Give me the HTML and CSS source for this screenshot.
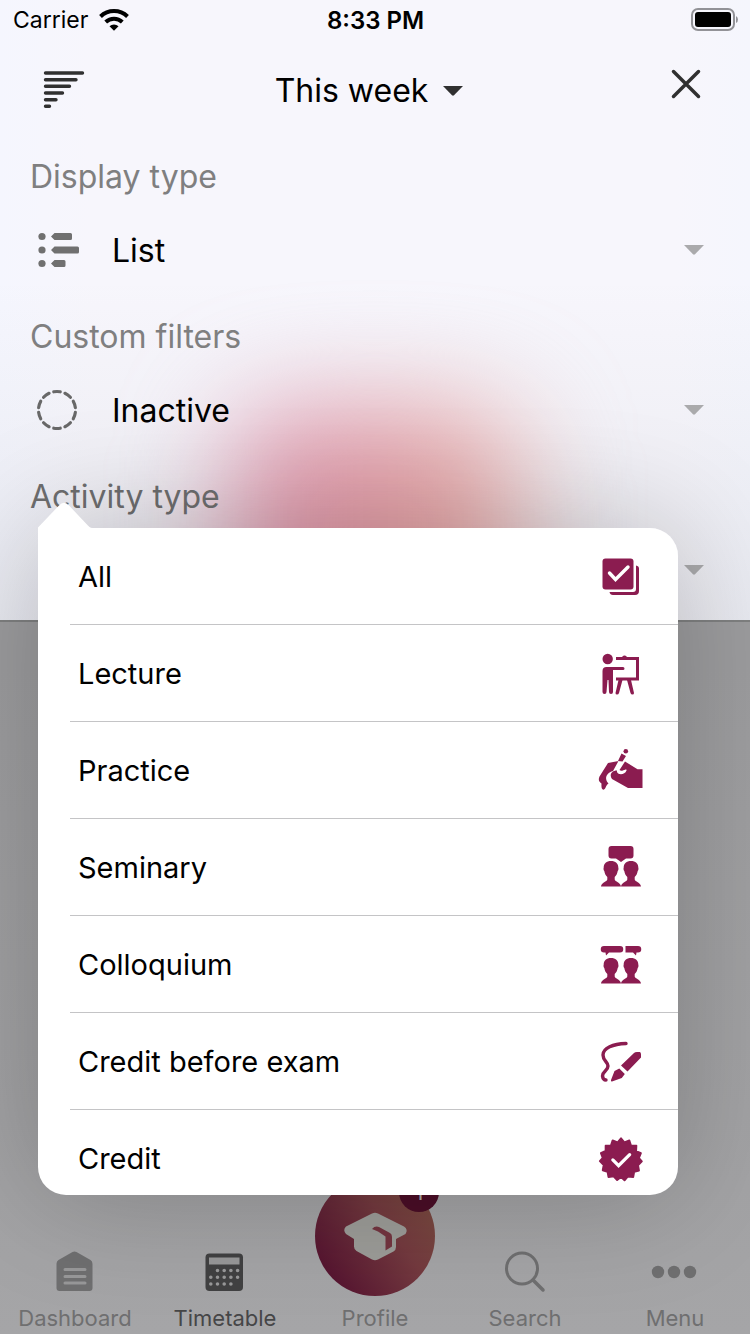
FILE: index.html
```html
<!DOCTYPE html>
<html lang="en">
<head>
<meta charset="utf-8">
<meta name="viewport" content="width=device-width, initial-scale=1">
<title>Timetable filters</title>
<link rel="stylesheet" href="styles.css">
</head>
<body>
<svg class="sprite" aria-hidden="true">
  <symbol id="caret" viewBox="0 0 20 10"><path d="M0 0h20L11 9.300q-1 .9-2 0z"/></symbol>
  <symbol id="person" viewBox="0 0 20 26"><path d="M10 0C14.500 0 17.300 2.600 17.300 6.500C17.600 7.500 17.600 9 16.700 10C16.300 12.600 15.300 14.500 13.700 16V18.500C14 20.800 19.500 21.300 20 25.500H0C.5 21.300 6 20.800 6.300 18.500V16C4.700 14.500 3.700 12.600 3.300 10C2.400 9 2.400 7.500 2.700 6.500C2.700 2.600 5.500 0 10 0z"/></symbol>
</svg>
<div class="app">
  <section class="panel">
    <div class="panel-glow" aria-hidden="true"><div class="glow"></div></div>
    <div class="status">
      <div class="carrier"><span>Carrier</span>
        <svg width="30" height="22" viewBox="0 0 30 22"><g fill="none" stroke="#000" stroke-width="4"><path d="M1.500 7.500A19.500 19.500 0 0 1 28.500 7.500"/><path d="M6.700 13A12 12 0 0 1 23.300 13"/></g><path d="M10.500 17.200A6.500 6.500 0 0 1 19.500 17.200L15 21.800z"/></svg>
      </div>
      <span class="time">8:33 PM</span>
      <svg class="battery" width="48" height="24" viewBox="0 0 48 24"><rect x="2" y="1" width="42" height="21" rx="6" fill="none" stroke="#929297" stroke-width="2"/><rect x="5" y="4" width="36" height="15" rx="3"/><path d="M46 8q2 1 2 3.500t-2 3.500z" fill="#929297"/></svg>
    </div>
    <header class="header">
      <button class="icon-button" aria-label="Sort"><svg width="72" height="48" viewBox="0 0 72 48"><path d="M17.500 7h37M17.500 13.700h30.500M17.500 20.300h24M17.500 27h17M17.500 33.700h10.500M17.500 40.300h4" stroke="#303030" stroke-width="3.400" stroke-linecap="round"/></svg></button>
      <button class="title">This week<svg class="caret dark" width="20" height="10"><use href="#caret"/></svg></button>
      <button class="icon-button close" aria-label="Close"><svg width="48" height="48" viewBox="0 0 48 48"><path d="M11.500 5.500l25 25M36.500 5.500l-25 25" stroke="#303030" stroke-width="3.500" stroke-linecap="round"/></svg></button>
    </header>
    <div class="group">
      <h2 class="label">Display type</h2>
      <button class="select"><svg width="52" height="48" viewBox="0 0 52 48" fill="#707070"><circle cx="10" cy="10.500" r="3.600"/><circle cx="10" cy="24" r="3.600"/><circle cx="10" cy="37.500" r="3.600"/><path d="M19 10.500l3.500-3.500H38.500q1.500 0 1.500 1.500v4q0 1.500-1.500 1.500H22.500zM19 24l3.500-3.500H45.500q1.500 0 1.500 1.500v4q0 1.500-1.500 1.500H22.500zM19 37.500l3.500-3.500H32q1.500 0 1.500 1.500v4q0 1.500-1.500 1.500H22.500z"/></svg><span>List</span><svg class="caret" width="20" height="10"><use href="#caret"/></svg></button>
    </div>
    <div class="group">
      <h2 class="label">Custom filters</h2>
      <button class="select"><svg width="52" height="48" viewBox="0 0 52 48"><circle cx="25" cy="24" r="18.500" fill="none" stroke="#686868" stroke-width="3.200" stroke-linecap="round" pathLength="100" stroke-dasharray="5.800 4.200" stroke-dashoffset="-2.100"/></svg><span>Inactive</span><svg class="caret" width="20" height="10"><use href="#caret"/></svg></button>
    </div>
    <div class="group">
      <h2 class="label dim">Activity type</h2>
      <button class="select" aria-label="Activity type"><span></span><svg class="caret" width="20" height="10"><use href="#caret"/></svg></button>
      <div class="popover">
        <svg class="arrow" width="54" height="27" viewBox="0 0 54 27"><path d="M0 27V25.500L21 3.500Q26 -2 31 3.500L48 21.500Q52 26 54 26V27z" fill="#fff"/></svg>
        <ul class="options">
          <li><button class="option">All<svg viewBox="0 0 48 48"><rect x="5.500" y="6.500" width="31" height="31" rx="3"/><path d="M39 13.500q3 .5 3 3V39q0 4-4 4H16q-3 0-3.500-3H36q3 0 3-3z"/><path d="M12.500 21l6 6.500L31 15" fill="none" stroke="#fff" stroke-width="3.400" stroke-linecap="round"/></svg></button></li>
          <li><button class="option">Lecture<svg viewBox="0 -1 48 48"><circle cx="10.700" cy="9" r="5.200"/><path d="M5.500 21q0-4 4-4H26q1.500 0 1.500 1.500T26 20H16v22q0 2-2 2t-2-2l-.5-12h-1L9.500 42q0 2-2 2t-2-2z"/><path d="M19 8.500h21.500v20.500H19" fill="none" stroke="currentColor" stroke-width="3"/><path d="M25 8q0-2.500 2.500-2.500T30 8zM21.500 30h4L22 43q-.5 1.500-2 1.500t-1.500-1.500zM30 30h4l3 13q0 1.500-1.500 1.500T33.500 43z"/></svg></button></li>
          <li><button class="option">Practice<svg viewBox="0 0 48 48"><circle cx="28.800" cy="5.200" r="2.300"/><path d="M24.500 7.500l4.500 2.500-3.500 5.500-4.500-.5zM11 17l10.500-2L16 25c-7 2-9 8-4.500 12.500-3 2-2.500 5-4.500 6q-3 1-2.500-6c-3-1.500-3.200-4.500-2-7z"/><path d="M28 15.500L40.500 23.300H45.500V42H31L15 33C12 29 14.500 24.500 20 24.500C19 29 27.500 30 29.500 24.500q.5-1.500-1-1c-2.500 1-4.500 2-6 .500z"/></svg></button></li>
          <li><button class="option">Seminary<svg viewBox="0 0 48 48"><path d="M14.500 3h19q3 0 3 3v6.500q0 3-3 3H29L24 19l-5-3.500h-4.500q-3 0-3-3V6q0-3 3-3z"/><use href="#person" x="4" y="18" width="20" height="26"/><use href="#person" x="24" y="18" width="20" height="26"/></svg></button></li>
          <li><button class="option">Colloquium<svg viewBox="0 0 48 48"><path d="M7 6h16a3.200 3.200 0 0 1 0 6.500H12l-3 3-.5-3H7a3.200 3.200 0 0 1 0-6.500zM28.500 6H41a3.200 3.200 0 0 1 0 6.500h-1.500l-.5 3-3-3h-7.500z"/><use href="#person" x="4" y="18" width="20" height="26"/><use href="#person" x="24" y="18" width="20" height="26"/></svg></button></li>
          <li><button class="option">Credit before exam<svg viewBox="0 -1 48 48"><path d="M29 5.500C16 6 6 10 6 17C6 23 11 24 11 28C11 33 5.500 33 5.500 38Q6 42 9 42" fill="none" stroke="currentColor" stroke-width="3.400" stroke-linecap="round"/><path d="M24 27.500L37 15q1-1 3-1h3q1 .5 1 2.500v3L30.500 33.500zM22.300 30.500l5.500 5.500-3 4L15 43.500q-1.500 0-1-1.500l3.500-9z"/></svg></button></li>
          <li><button class="option">Credit<svg viewBox="-1 -2 50 50"><path d="M24 2.500l3.500 4.200 5.200-2 1.700 5.300 5.600.3-.3 5.500 5 2.200-2 5 3 3.500-4 4 1 5.500-5 1.500-1 5.300-5.500-.6-3.500 4L24 42.800 20 46l-3.700-4-5.300.8-1-5.500-5-1.500 1-5.500-4-4 3-3.500-2-5 5-2.200L8 10.300l5.500-.3 1.800-5.300 5.200 2z" stroke="currentColor" stroke-linejoin="round" class="seal"/><path d="M15.500 25l6 6L33 19.500" fill="none" stroke="#fff" stroke-width="3.400" stroke-linecap="round"/></svg></button></li>
        </ul>
      </div>
    </div>
  </section>
  <main class="content"></main>
  <nav class="tabs">
    <a class="tab" href="#dashboard"><svg width="48" height="48" viewBox="0 -3 48 48"><path d="M21.500 1q2-1 4 0l14 8q2 1 2 4v24q0 3-3 3h-30q-3 0-3-3V13q0-3 2-4z" fill="#6f6f70"/><path d="M14 18.500h20M14 25.500h20M14 32h20" stroke="#989899" stroke-width="3" stroke-linecap="round"/></svg>Dashboard</a>
    <a class="tab active" href="#timetable"><svg width="48" height="48" viewBox="0 -1 48 48"><rect x="4.500" y="4.500" width="37.500" height="37.500" rx="4" fill="#414142"/><path d="M8 8.500h30.500v7H8z" fill="#989899"/><path d="M16.500 21.500h21M9.800 28.200h28M9.800 35h21" stroke="#989899" stroke-width="3.600" stroke-linecap="round" stroke-dasharray="0 6.700"/></svg>Timetable</a>
    <a class="tab profile" href="#profile"><span class="disc"><svg width="120" height="120" viewBox="0 -17 120 120"><path d="M57 20.500q3-1.500 6 0L89 33.500q4.500 3 1.500 7.500L81 46V54q0 3-2.500 4.500L63 66.500q-3 1.500-6 0L41.500 58q-2.500-1.500-2.500-4.500V46L31 41q-3.500-4 0-7.500z" fill="#9c9c98"/><path d="M57 36q3-3.500 7-2l11 6q2 1 2 4v9.500l-6.500 4V43.500L63 38.500z" fill="#743540"/></svg><span class="badge">1</span></span>Profile</a>
    <a class="tab" href="#search"><svg width="48" height="48" viewBox="0 0 48 48" fill="none" stroke="#6f6f70" stroke-width="3"><circle cx="21" cy="20.500" r="15.500"/><path d="M32 32l10 10" stroke-width="3.500" stroke-linecap="round"/></svg>Search</a>
    <a class="tab" href="#menu"><svg width="48" height="48" viewBox="0 0 48 48" fill="#6f6f70"><circle cx="7" cy="24" r="6.200"/><circle cx="23" cy="24" r="6.200"/><circle cx="39" cy="24" r="6.200"/></svg>Menu</a>
  </nav>
</div>
</body>
</html>
```
FILE: styles.css
```css
* { box-sizing: border-box; }
body {
  margin: 0;
  font-family: Inter, "Liberation Sans", sans-serif;
  color: #000;
}
button {
  margin: 0;
  padding: 0;
  border: 0;
  background: none;
  font: inherit;
  color: inherit;
  text-align: left;
}
svg { display: block; flex: none; }
.sprite { position: absolute; width: 0; height: 0; }
.app {
  display: flex;
  flex-direction: column;
  min-height: 100vh;
  background: linear-gradient(#9c9c9e 50%, #a5a5a7);
  overflow: hidden;
}
.panel {
  position: relative;
  z-index: 1;
  background:
    linear-gradient(rgba(120, 125, 130, 0) 45%, rgba(120, 125, 130, 0.1)),
    linear-gradient(90deg, #f5f6fe, #f7f6fc 12%, #f7f6fc 90%, #f5f6fd);
  box-shadow: 0 2px 0 #7f8081;
}
.panel-glow {
  position: absolute;
  inset: 0;
  overflow: hidden;
}
.glow {
  position: absolute;
  left: 31%;
  right: 31%;
  top: 410px;
  height: 400px;
  border-radius: 60px;
  background: linear-gradient(100deg, #dc8fac, #e4a3a5 60%, #e9b3a8);
  filter: blur(54px);
}
.status {
  position: relative;
  display: grid;
  grid-template-columns: 1fr auto 1fr;
  align-items: center;
  height: 40px;
  padding: 0 12px 0 13px;
  font-size: 23px;
}
.carrier { display: flex; align-items: center; gap: 11px; }
.time { font-size: 24px; font-weight: 600; }
.battery { justify-self: end; }
.header {
  position: relative;
  display: grid;
  grid-template-columns: 1fr auto 1fr;
  align-items: center;
  height: 100px;
  padding: 0 40px 0 28px;
}
.icon-button { justify-self: start; }
.close { justify-self: end; }
.title {
  display: flex;
  align-items: center;
  gap: 15px;
  padding-top: 2px;
  font-size: 32px;
  line-height: 40px;
}
.caret { fill: #aaaaac; }
.caret.dark { fill: #303030; }
.group {
  position: relative;
  padding: 17px 46px 10px 30px;
}
.label {
  margin: 0 0 13px;
  font-size: 32px;
  font-weight: 400;
  line-height: 40px;
  color: #7f7f80;
}
.label.dim { color: #6e6e6f; }
.select {
  display: flex;
  align-items: center;
  gap: 28px;
  width: 100%;
  height: 80px;
  padding-left: 2px;
  font-size: 32px;
}
.select span { flex: 1; }
.popover {
  position: absolute;
  top: 68px;
  left: 38px;
  right: 72px;
  border-radius: 0 28px 28px;
  box-shadow: 0 0 120px rgba(0, 0, 0, 0.22);
}
.arrow {
  position: absolute;
  left: 0;
  bottom: 100%;
  margin-bottom: -1px;
}
.options {
  margin: 0;
  padding: 0 0 0 32px;
  max-height: calc(100vh - 667px);
  overflow: auto;
  scrollbar-width: none;
  list-style: none;
  background: #fff;
  border-radius: 0 28px 28px;
}
.options li { border-bottom: 1px solid #c4c4c6; }
.option {
  display: flex;
  align-items: center;
  justify-content: space-between;
  width: 100%;
  height: 96px;
  padding: 0 33px 0 8px;
  font-size: 29px;
}
.option svg { width: 48px; height: 48px; fill: currentColor; color: #8b1c50; }
.seal { stroke-width: 2px; }
.content { flex: 1; }
.tabs {
  display: grid;
  grid-template-columns: repeat(5, 1fr);
  align-items: end;
  padding-bottom: 2px;
}
.tab {
  display: flex;
  flex-direction: column;
  align-items: center;
  gap: 8px;
  font-size: 22px;
  line-height: 28px;
  color: #6f6f70;
  text-decoration: none;
}
.tab.active { color: #464647; }
.disc {
  position: relative;
  border-radius: 50%;
  background: linear-gradient(55deg, #571631 15%, #743a3f 60%, #7a4a40 90%);
}
.badge {
  position: absolute;
  top: -4px;
  right: -4px;
  width: 40px;
  height: 40px;
  border-radius: 50%;
  background: #4b0e27;
  color: #aaa;
  line-height: 40px;
  text-align: center;
}
```
